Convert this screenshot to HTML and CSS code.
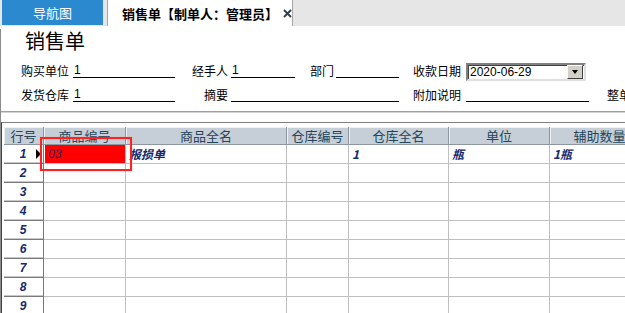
FILE: index.html
```html
<!DOCTYPE html>
<html>
<head>
  <meta charset="utf-8">
  <title>销售单</title>
  <link rel="stylesheet" href="styles.css">
</head>
<body>
  <div class="tabs">
    <div class="tab-nav">导航图</div>
    <div class="tab-cur">销售单【制单人：管理员】<svg class="close" width="9" height="9" viewBox="0 0 9 9"><path d="M1 1L8 8M8 1L1 8" stroke="#2c3c4c" stroke-width="1.8"/></svg></div>
  </div>
  <div class="main">
    <h1 class="title">销售单</h1>
    <div class="form-row">
      <span class="lbl lbl-a">购买单位</span><span class="fld fld-m">1</span>
      <span class="lbl lbl-b">经手人</span><span class="fld fld-s">1</span>
      <span class="lbl lbl-dept">部门</span><span class="fld fld-s2"></span>
      <span class="lbl lbl-c">收款日期</span>
      <div class="date">
        <span class="date-txt">2020-06-29</span>
        <span class="date-btn"><i class="tri"></i></span>
      </div>
    </div>
    <div class="form-row row2">
      <span class="lbl lbl-a">发货仓库</span><span class="fld fld-m">1</span>
      <span class="lbl lbl-b">摘要</span><span class="fld fld-l"></span>
      <span class="lbl lbl-c">附加说明</span><span class="fld fld-memo"></span>
      <span class="lbl lbl-end">整单折扣</span>
    </div>
    <div class="sep"></div>
    <div class="grid-wrap">
      <table class="grid">
        <tr>
          <th class="c0">行号</th>
          <th class="c1">商品编号</th>
          <th class="c2">商品全名</th>
          <th class="c3">仓库编号</th>
          <th class="c4">仓库全名</th>
          <th class="c5">单位</th>
          <th class="c6">辅助数量</th>
        </tr>
        <tr>
          <td class="rn">1<span class="arrow"></span></td>
          <td class="hl"><div class="hl-box">03</div></td>
          <td>报损单</td><td></td><td>1</td><td>瓶</td><td>1瓶</td>
        </tr>
        <tr><td class="rn">2</td><td></td><td></td><td></td><td></td><td></td><td></td></tr>
        <tr><td class="rn">3</td><td></td><td></td><td></td><td></td><td></td><td></td></tr>
        <tr><td class="rn">4</td><td></td><td></td><td></td><td></td><td></td><td></td></tr>
        <tr><td class="rn">5</td><td></td><td></td><td></td><td></td><td></td><td></td></tr>
        <tr><td class="rn">6</td><td></td><td></td><td></td><td></td><td></td><td></td></tr>
        <tr><td class="rn">7</td><td></td><td></td><td></td><td></td><td></td><td></td></tr>
        <tr><td class="rn">8</td><td></td><td></td><td></td><td></td><td></td><td></td></tr>
        <tr><td class="rn">9</td><td></td><td></td><td></td><td></td><td></td><td></td></tr>
      </table>
      <div class="focus-box"></div>
    </div>
  </div>
</body>
</html>
```

FILE: styles.css
```css
body{
  margin:0;
  width:625px;
  height:313px;
  overflow:hidden;
  background:#fff;
  font-family:"Noto Sans CJK SC","Liberation Sans",sans-serif;
  font-size:12px;
  color:#000;
}
.tabs{
  display:flex;
  height:26px;
  padding-left:2px;
  background:#e6e6e6;
}
.tab-nav{
  width:101px;
  height:25px;
  line-height:25px;
  text-align:center;
  font-size:13px;
  color:#fff;
  background:#2b89cf;
}
.tab-cur{
  display:flex;
  align-items:center;
  margin-left:4px;
  width:170px;
  padding-left:14px;
  background:#fff;
  border-left:1px solid #a6a6a6;
  border-right:1px solid #a6a6a6;
  font-size:13px;
  font-weight:bold;
  white-space:nowrap;
}
.close{
  margin-left:5px;
  flex:none;
}
.main{
  height:287px;
  border-left:1px solid #8c8c8c;
}
.title{
  margin:3px 0 0 24px;
  height:24px;
  line-height:24px;
  font-size:20px;
  font-weight:normal;
}
.form-row{
  display:flex;
  height:20px;
  line-height:20px;
  margin-top:8px;
  padding-left:20px;
  white-space:nowrap;
}
.form-row.row2{
  margin-top:4px;
}
.lbl{
  flex:none;
}
.lbl-a{ width:48px; margin-right:4px; }
.lbl-b{ width:53px; margin-right:3px; text-align:right; }
.lbl-c{ width:62px; margin-right:5px; text-align:right; }
.lbl-dept{ margin-left:15px; margin-right:2px; }
.lbl-end{ margin-left:18px; }
.fld{
  flex:none;
  height:15px;
  margin-top:1px;
  padding-left:1px;
  box-sizing:content-box;
  border-bottom:1px solid #000;
  line-height:17px;
  font-family:"Liberation Sans",sans-serif;
}
.fld-m{ width:101px; }
.fld-s{ width:63px; }
.fld-s2{ width:62px; }
.fld-l{ width:167px; }
.fld-memo{ width:122px; }
.date{
  flex:none;
  display:flex;
  margin-top:2px;
  width:116px;
  height:14px;
  border:2px solid;
  border-color:#808080 #e0e0e0 #e0e0e0 #808080;
  box-shadow:inset 1px 1px #404040;
  background:#fff;
}
.date-txt{
  flex:1;
  padding-left:2px;
  line-height:15px;
  font-family:"Liberation Sans",sans-serif;
  font-size:12px;
}
.date-btn{
  display:flex;
  align-items:center;
  justify-content:center;
  width:14px;
  height:12px;
  margin:0 1px 0 0;
  background:#d4d0c8;
  border:1px solid;
  border-color:#fff #404040 #404040 #fff;
}
.tri{
  width:0;
  height:0;
  border-left:3px solid transparent;
  border-right:3px solid transparent;
  border-top:4px solid #000;
}
.sep{
  margin-top:6px;
  border-top:1px solid #a0a0a0;
  border-bottom:1px solid #d4d4d4;
}
.grid-wrap{
  position:relative;
  margin-top:9px;
  padding:4px 0 0 2px;
  height:200px;
  overflow:hidden;
  border-top:1px solid #808080;
  border-left:1px solid #404040;
}
.grid{
  width:646px;
  table-layout:fixed;
  border-spacing:0;
}
.grid th{
  box-sizing:border-box;
  height:18px;
  padding:0;
  line-height:17px;
  font-size:13px;
  font-weight:normal;
  color:#23465a;
  background:#c6ced7;
  border-right:1px solid #8d959e;
  border-bottom:1px solid #8d959e;
  box-shadow:inset 1px 1px #eef2f6;
  white-space:nowrap;
  overflow:hidden;
}
.c0{ width:40px; }
.c1{ width:82px; }
.c2{ width:161px; }
.c3{ width:62px; }
.c4{ width:100px; }
.c5{ width:101px; }
.c6{ width:100px; }
.grid td{
  box-sizing:border-box;
  height:19px;
  padding:0 3px;
  line-height:18px;
  border-right:1px solid #c0c0c0;
  border-bottom:1px solid #c0c0c0;
  font-weight:bold;
  font-style:italic;
  color:#142a6e;
  white-space:nowrap;
  overflow:hidden;
}
.grid td.rn{
  position:relative;
  text-align:center;
  font-family:"Liberation Sans",sans-serif;
  border-right:1px solid #7a7a7a;
  border-bottom:1px solid #7a7a7a;
  box-shadow:inset 0 -1px #c8c8c8;
  padding-right:4px;
}
.arrow{
  position:absolute;
  right:2px;
  top:4px;
  width:0;
  height:0;
  border-left:5px solid #000;
  border-top:5px solid transparent;
  border-bottom:5px solid transparent;
}
.grid td.hl{
  padding:0;
}
.hl-box{
  margin-left:1px;
  height:18px;
  padding-left:3px;
  background:#ff0000;
  font-weight:normal;
  font-family:"Liberation Sans",sans-serif;
}
.focus-box{
  position:absolute;
  left:38px;
  top:14px;
  width:92px;
  height:34px;
  box-sizing:border-box;
  border:2px solid #f22;
  box-shadow:0 0 1px #f88;
}
```
